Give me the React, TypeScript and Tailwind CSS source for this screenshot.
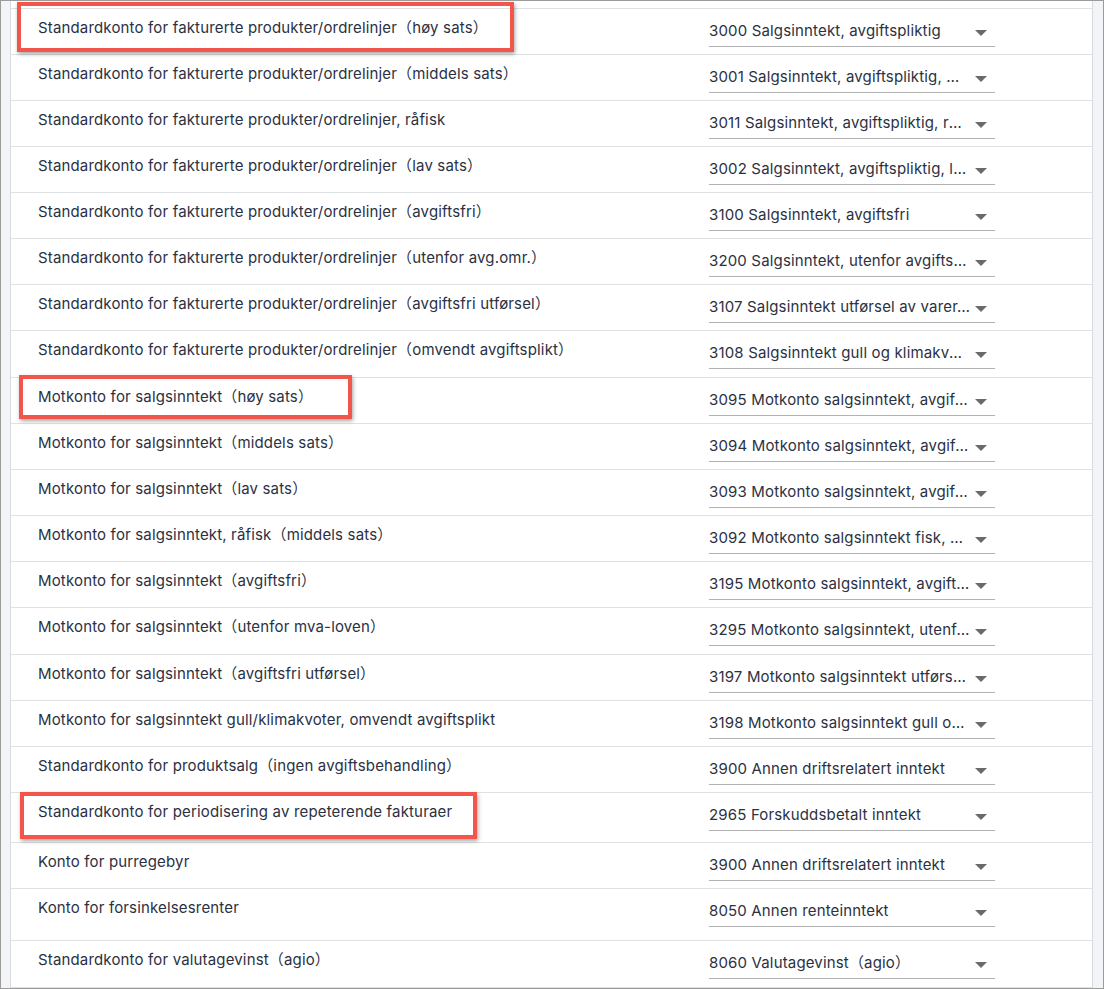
import React from "react";

type Row = { label: string; account: string; h: number };

// full-width parentheses as in the original rendering
const rows: Row[] = [
  { label: "Standardkonto for fakturerte produkter/ordrelinjer（høy sats）", account: "3000 Salgsinntekt, avgiftspliktig", h: 46 },
  { label: "Standardkonto for fakturerte produkter/ordrelinjer（middels sats）", account: "3001 Salgsinntekt, avgiftspliktig, middels sats", h: 46 },
  { label: "Standardkonto for fakturerte produkter/ordrelinjer, råfisk", account: "3011 Salgsinntekt, avgiftspliktig, råfisk", h: 46 },
  { label: "Standardkonto for fakturerte produkter/ordrelinjer（lav sats）", account: "3002 Salgsinntekt, avgiftspliktig, lav sats", h: 46 },
  { label: "Standardkonto for fakturerte produkter/ordrelinjer（avgiftsfri）", account: "3100 Salgsinntekt, avgiftsfri", h: 46 },
  { label: "Standardkonto for fakturerte produkter/ordrelinjer（utenfor avg.omr.）", account: "3200 Salgsinntekt, utenfor avgiftsområdet", h: 46 },
  { label: "Standardkonto for fakturerte produkter/ordrelinjer（avgiftsfri utførsel）", account: "3107 Salgsinntekt utførsel av varer, avgiftsfri", h: 46 },
  { label: "Standardkonto for fakturerte produkter/ordrelinjer（omvendt avgiftsplikt）", account: "3108 Salgsinntekt gull og klimakvoter, omvendt", h: 47 },
  { label: "Motkonto for salgsinntekt（høy sats）", account: "3095 Motkonto salgsinntekt, avgiftspliktig", h: 46 },
  { label: "Motkonto for salgsinntekt（middels sats）", account: "3094 Motkonto salgsinntekt, avgiftspliktig", h: 46 },
  { label: "Motkonto for salgsinntekt（lav sats）", account: "3093 Motkonto salgsinntekt, avgiftspliktig", h: 46 },
  { label: "Motkonto for salgsinntekt, råfisk（middels sats）", account: "3092 Motkonto salgsinntekt fisk, avgiftspliktig", h: 46 },
  { label: "Motkonto for salgsinntekt（avgiftsfri）", account: "3195 Motkonto salgsinntekt, avgiftsfri", h: 46 },
  { label: "Motkonto for salgsinntekt（utenfor mva-loven）", account: "3295 Motkonto salgsinntekt, utenfor mva-loven", h: 47 },
  { label: "Motkonto for salgsinntekt（avgiftsfri utførsel）", account: "3197 Motkonto salgsinntekt utførsel, avgiftsfri", h: 46 },
  { label: "Motkonto for salgsinntekt gull/klimakvoter, omvendt avgiftsplikt", account: "3198 Motkonto salgsinntekt gull og klimakvoter", h: 46 },
  { label: "Standardkonto for produktsalg（ingen avgiftsbehandling）", account: "3900 Annen driftsrelatert inntekt", h: 46 },
  { label: "Standardkonto for periodisering av repeterende fakturaer", account: "2965 Forskuddsbetalt inntekt", h: 50 },
  { label: "Konto for purregebyr", account: "3900 Annen driftsrelatert inntekt", h: 46 },
  { label: "Konto for forsinkelsesrenter", account: "8050 Annen renteinntekt", h: 52 },
  { label: "Standardkonto for valutagevinst（agio）", account: "8060 Valutagevinst（agio）", h: 47 },
];

const font = { fontFamily: "Inter, 'Noto Sans CJK SC', sans-serif" };

function AccountSelect({ value }: { value: string }) {
  return (
    <div className="mt-[3px] flex h-[35px] w-[286px] items-center border-b border-[#b3b3b3] pt-[4px]">
      <span className="w-[261px] truncate text-[15px] tracking-[0.16px] text-[#2b3142]">{value}</span>
      <svg className="ml-[5px] mt-[3px] h-[6px] w-[12px]" viewBox="0 0 12 6">
        <polygon points="0,0 12,0 6,6" fill="#6a6a6a" />
      </svg>
    </div>
  );
}

function Highlight({ className }: { className: string }) {
  return (
    <div
      className={`pointer-events-none absolute border-[4px] border-[#f2554a] shadow-[1px_2px_4px_rgba(0,0,0,0.35)] ${className}`}
    />
  );
}

export default function App() {
  return (
    <div
      className="relative h-[989px] w-[1104px] overflow-hidden border border-[#9b9b9b] bg-[#f3f4f8]"
      style={font}
    >
      <div className="ml-[9px] mr-[10px] h-full border-x border-[#d9dbe0] bg-white">
        <div className="h-[8px] border-b border-[#e0e1e4]" />
        {rows.map((r, i) => (
          <div
            key={i}
            className="grid grid-cols-[671px_286px] border-b border-[#e0e1e4] pl-[27px]"
            style={{ height: r.h }}
          >
            <div className="pt-[9px] text-[15px] leading-[20px] tracking-[0.16px] text-[#2b3142]">{r.label}</div>
            <AccountSelect value={r.account} />
          </div>
        ))}
      </div>

      <Highlight className="left-[16px] top-[1px] h-[50px] w-[497px]" />
      <Highlight className="left-[18px] top-[374px] h-[44px] w-[333px]" />
      <Highlight className="left-[19px] top-[791px] h-[47px] w-[457px]" />
    </div>
  );
}
